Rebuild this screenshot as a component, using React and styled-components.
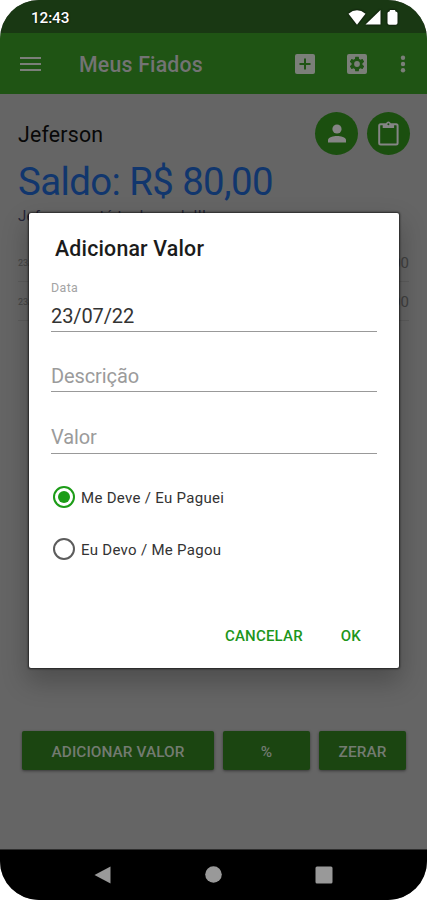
import React from "react";
import styled, { createGlobalStyle } from "styled-components";

const GlobalStyle = createGlobalStyle`
  * { box-sizing: border-box; }
  body { margin: 0; background: #fff; font-family: Roboto, "Liberation Sans", sans-serif; }
  button { font-family: inherit; border: 0; padding: 0; margin: 0; }
  svg { display: block; }
`;

const Phone = styled.div`
  position: relative;
  display: flex;
  flex-direction: column;
  width: 427px;
  height: 900px;
  overflow: hidden;
  border-radius: 39px;
  background: #656565;
`;

const StatusBar = styled.header`
  display: flex;
  align-items: center;
  justify-content: space-between;
  height: 33px;
  flex: none;
  padding: 2px 27px 0 31px;
  background: #193813;
  color: #fff;
`;

const Clock = styled.span`
  font-size: 15.3px;
  font-weight: 500;
  line-height: 18px;
  letter-spacing: -0.1px;
  text-shadow: 0 0 2px #000;
`;

const StatusIcons = styled.div`
  display: flex;
  align-items: center;
  filter: drop-shadow(0 0 1px #000);
`;

const AppBar = styled.div`
  display: flex;
  align-items: center;
  height: 61px;
  flex: none;
  padding: 0 21px 0 20px;
  background: #1f5414;
  color: #737373;
`;

const IconButton = styled.button`
  display: flex;
  background: none;
  color: #7b7f79;
  margin-left: ${(p) => p.$gap || 0}px;
`;

const AppTitle = styled.h1`
  flex: 1;
  margin: 2px 0 0 38px;
  font-size: 21.3px;
  font-weight: 500;
  letter-spacing: 0.2px;
  line-height: 26px;
`;

const Content = styled.main`
  display: flex;
  flex-direction: column;
  flex: 1;
  padding: 17px 18px 0 18px;
`;

const PersonRow = styled.div`
  display: flex;
  align-items: center;
  height: 44px;
`;

const PersonName = styled.h2`
  flex: 1;
  margin: 3px 0 0;
  font-size: 21.3px;
  font-weight: 400;
  letter-spacing: 0.2px;
  line-height: 26px;
  color: #080808;
`;

const RoundButton = styled.button`
  display: flex;
  align-items: center;
  justify-content: center;
  width: 43px;
  height: 43px;
  margin-left: ${(p) => p.$gap || 0}px;
  margin-right: ${(p) => (p.$last ? -1 : 0)}px;
  border-radius: 50%;
  background: #1b4f0f;
  color: #858585;
`;

const Balance = styled.div`
  margin-top: 5px;
  height: 44px;
  font-size: 38.4px;
  font-weight: 400;
  line-height: 44px;
  letter-spacing: -0.6px;
  color: #11366d;
`;

const Note = styled.div`
  margin-top: 3px;
  font-size: 15px;
  line-height: 18px;
  letter-spacing: 0.3px;
  color: #252538;
`;

const Entries = styled.div`
  margin-top: 17px;
`;

const Entry = styled.div`
  display: flex;
  align-items: center;
  justify-content: space-between;
  height: 39.5px;
  padding-top: 3px;
  border-bottom: 1px solid #5c5c5c;
  color: #404040;
  font-size: 15px;
`;

const EntryDate = styled.span`
  font-size: 9px;
  color: #444;
`;

const Actions = styled.div`
  display: grid;
  grid-template-columns: 192px 87px 87px;
  column-gap: 9px;
  margin: auto 0 79px 4px;
`;

const ActionButton = styled.button`
  height: 39px;
  border-radius: 2px;
  background: #1b4511;
  box-shadow: 0 1px 3px rgba(0, 0, 0, 0.45);
  color: #737b71;
  font-size: 15.4px;
  font-weight: 500;
  letter-spacing: 0.05px;
  line-height: 18px;
  padding-top: 2px;
`;

const NavBar = styled.nav`
  display: flex;
  align-items: center;
  justify-content: space-between;
  height: 51px;
  flex: none;
  padding: 0 94px 1px 94px;
  background: #000;
  border-top: 1px solid #2e2e2e;
`;

const Dialog = styled.section`
  position: absolute;
  left: 29px;
  top: 213px;
  width: 370px;
  height: 455px;
  display: flex;
  flex-direction: column;
  padding: 23px 22px 0;
  border-radius: 2px;
  background: #fff;
  box-shadow: 0 0 2px 1px rgba(0, 0, 0, 0.6), 0 12px 26px 2px rgba(0, 0, 0, 0.24);
`;

const DialogTitle = styled.h2`
  margin: 0 0 0 4px;
  font-size: 21.3px;
  font-weight: 500;
  letter-spacing: 0.2px;
  line-height: 26px;
  color: #1b1b1b;
`;

const Field = styled.div`
  display: flex;
  flex-direction: column;
  justify-content: flex-end;
  height: ${(p) => p.$height}px;
  padding-bottom: ${(p) => p.$bottom || 3}px;
  border-bottom: 1px solid #999;
`;

const FieldLabel = styled.label`
  font-size: 12.4px;
  line-height: 15px;
  letter-spacing: 0.4px;
  color: #a4a4a4;
`;

const FieldText = styled.div`
  margin-top: ${(p) => (p.$filled ? 9 : 0)}px;
  font-size: 20px;
  line-height: 24px;
  letter-spacing: ${(p) => (p.$filled ? -0.1 : -0.1)}px;
  color: ${(p) => (p.$filled ? "#333" : "#9b9b9b")};
`;

const Options = styled.div`
  display: flex;
  flex-direction: column;
  gap: 30px;
  margin: 32px 0 0 2px;
`;

const Option = styled.div`
  display: flex;
  align-items: center;
  height: 22px;
  gap: 6px;
  font-size: 15px;
  letter-spacing: 0.3px;
  color: #333;
`;

const OptionText = styled.span`
  padding-top: 1px;
`;

const Radio = styled.span`
  display: flex;
  align-items: center;
  justify-content: center;
  width: 22px;
  height: 22px;
  border: 2px solid ${(p) => (p.$on ? "#1c9c17" : "#5c5c5c")};
  border-radius: 50%;

  &::after {
    content: "";
    width: 12px;
    height: 12px;
    border-radius: 50%;
    background: ${(p) => (p.$on ? "#1c9c17" : "transparent")};
  }
`;

const DialogActions = styled.div`
  display: flex;
  justify-content: flex-end;
  gap: 38px;
  margin: auto 16px 22px 0;
`;

const TextButton = styled.button`
  background: none;
  font-size: 15px;
  font-weight: 500;
  line-height: 20px;
  letter-spacing: 0.2px;
  color: #1d961b;
`;

function SignalIcons() {
  return (
    <svg width="52" height="17" viewBox="0 0 52 17" fill="#fff">
      <path d="M.5 4.7Q9 -2 17.5 4.7L9 15.8Z" />
      <path d="M32.5 1V15.5H17.5Z" />
      <path d="M39.5 4Q39.5 2.5 41.5 2.5L42 1H47L47.5 2.5Q49.5 2.5 49.5 4V14Q49.5 15.8 47.7 15.8H41.3Q39.5 15.8 39.5 14Z" />
    </svg>
  );
}

function MenuIcon() {
  return (
    <svg width="21" height="16" viewBox="0 0 21 16" fill="currentColor">
      <path d="M0 1h21v2H0zM0 7h21v2H0zM0 13h21v2H0z" />
    </svg>
  );
}

function AddBoxIcon() {
  return (
    <svg width="20" height="20" viewBox="0 0 20 20">
      <rect width="20" height="20" rx="2" fill="currentColor" />
      <path d="M4.5 10h11M10 4.5v11" stroke="#1f5414" strokeWidth="2" />
    </svg>
  );
}

function SettingsBoxIcon() {
  return (
    <svg width="20" height="20" viewBox="2 2 20 20">
      <rect x="2" y="2" width="20" height="20" rx="2" fill="currentColor" />
      <g transform="translate(12 12) scale(.76) translate(-12 -12)">
        <path
          fill="#1f5414"
          d="M19.14 12.94c.04-.3.06-.61.06-.94s-.02-.64-.07-.94l2.03-1.58a.49.49 0 0 0 .12-.61l-1.92-3.32a.49.49 0 0 0-.59-.22l-2.39.96a7 7 0 0 0-1.62-.94l-.36-2.54A.48.48 0 0 0 13.92 2.4h-3.84a.48.48 0 0 0-.47.41l-.36 2.54a7.3 7.3 0 0 0-1.62.94l-2.39-.96a.48.48 0 0 0-.59.22L2.73 8.87a.47.47 0 0 0 .12.61l2.03 1.58a6 6 0 0 0 0 1.88l-2.03 1.58a.49.49 0 0 0-.12.61l1.92 3.32c.12.22.37.29.59.22l2.39-.96c.5.38 1.03.7 1.62.94l.36 2.54c.05.24.24.41.48.41h3.84c.24 0 .44-.17.47-.41l.36-2.54a7.3 7.3 0 0 0 1.62-.94l2.39.96c.22.08.47 0 .59-.22l1.92-3.32a.47.47 0 0 0-.12-.61z"
        />
        <circle cx="12" cy="12" r="3.8" fill="currentColor" />
      </g>
    </svg>
  );
}

function MoreIcon() {
  return (
    <svg width="6" height="18" viewBox="0 0 6 18" fill="currentColor">
      <circle cx="3" cy="2.7" r="2.2" />
      <circle cx="3" cy="9" r="2.2" />
      <circle cx="3" cy="15.3" r="2.2" />
    </svg>
  );
}

function PersonIcon() {
  return (
    <svg width="18" height="19" viewBox="0 0 18 19" fill="currentColor">
      <circle cx="9" cy="5" r="4.6" />
      <path d="M0 18.4V16C0 13 5.5 11.9 9 11.9S18 13 18 16V18.4Z" />
    </svg>
  );
}

function ClipboardIcon() {
  return (
    <svg width="21" height="25" viewBox="0 0 21 25">
      <rect x="1.2" y="3.2" width="18.4" height="20.4" rx="1.5" fill="none" stroke="currentColor" strokeWidth="2" />
      <path d="M4.7 3h3.2C8.2 1.5 9.2.6 10.4.6S12.6 1.5 13 3h3.1v4H4.7Z" fill="currentColor" />
      <circle cx="10.4" cy="3.2" r="1" fill="#1b4f0f" />
    </svg>
  );
}

export default function App() {
  return (
    <>
      <GlobalStyle />
      <Phone>
        <StatusBar>
          <Clock>12:43</Clock>
          <StatusIcons>
            <SignalIcons />
          </StatusIcons>
        </StatusBar>
        <AppBar>
          <IconButton aria-label="Menu"><MenuIcon /></IconButton>
          <AppTitle>Meus Fiados</AppTitle>
          <IconButton aria-label="Adicionar"><AddBoxIcon /></IconButton>
          <IconButton aria-label="Configurações" $gap={32}><SettingsBoxIcon /></IconButton>
          <IconButton aria-label="Mais" $gap={33}><MoreIcon /></IconButton>
        </AppBar>
        <Content>
          <PersonRow>
            <PersonName>Jeferson</PersonName>
            <RoundButton aria-label="Pessoa"><PersonIcon /></RoundButton>
            <RoundButton aria-label="Notas" $gap={9} $last><ClipboardIcon /></RoundButton>
          </PersonRow>
          <Balance>Saldo: R$ 80,00</Balance>
          <Note>Jeferson está te devendo!!!</Note>
          <Entries>
            <Entry><EntryDate>23/07</EntryDate><span>100,00</span></Entry>
            <Entry><EntryDate>23/07</EntryDate><span>20,00</span></Entry>
          </Entries>
          <Actions>
            <ActionButton>ADICIONAR VALOR</ActionButton>
            <ActionButton>%</ActionButton>
            <ActionButton>ZERAR</ActionButton>
          </Actions>
        </Content>
        <NavBar>
          <svg width="17" height="18" viewBox="0 0 17 18"><path d="M.5 9 16.5 .5v17Z" fill="#999" /></svg>
          <svg width="17" height="17" viewBox="0 0 17 17"><circle cx="8.5" cy="8.5" r="8.3" fill="#999" /></svg>
          <svg width="18" height="18" viewBox="0 0 18 18"><rect x=".5" y=".5" width="17" height="17" rx="1.5" fill="#999" /></svg>
        </NavBar>
        <Dialog role="dialog">
          <DialogTitle>Adicionar Valor</DialogTitle>
          <Field $height={70}>
            <FieldLabel>Data</FieldLabel>
            <FieldText $filled>23/07/22</FieldText>
          </Field>
          <Field $height={60}><FieldText>Descrição</FieldText></Field>
          <Field $height={62} $bottom={4}><FieldText>Valor</FieldText></Field>
          <Options>
            <Option><Radio $on /><OptionText>Me Deve / Eu Paguei</OptionText></Option>
            <Option><Radio /><OptionText>Eu Devo / Me Pagou</OptionText></Option>
          </Options>
          <DialogActions>
            <TextButton>CANCELAR</TextButton>
            <TextButton>OK</TextButton>
          </DialogActions>
        </Dialog>
      </Phone>
    </>
  );
}
